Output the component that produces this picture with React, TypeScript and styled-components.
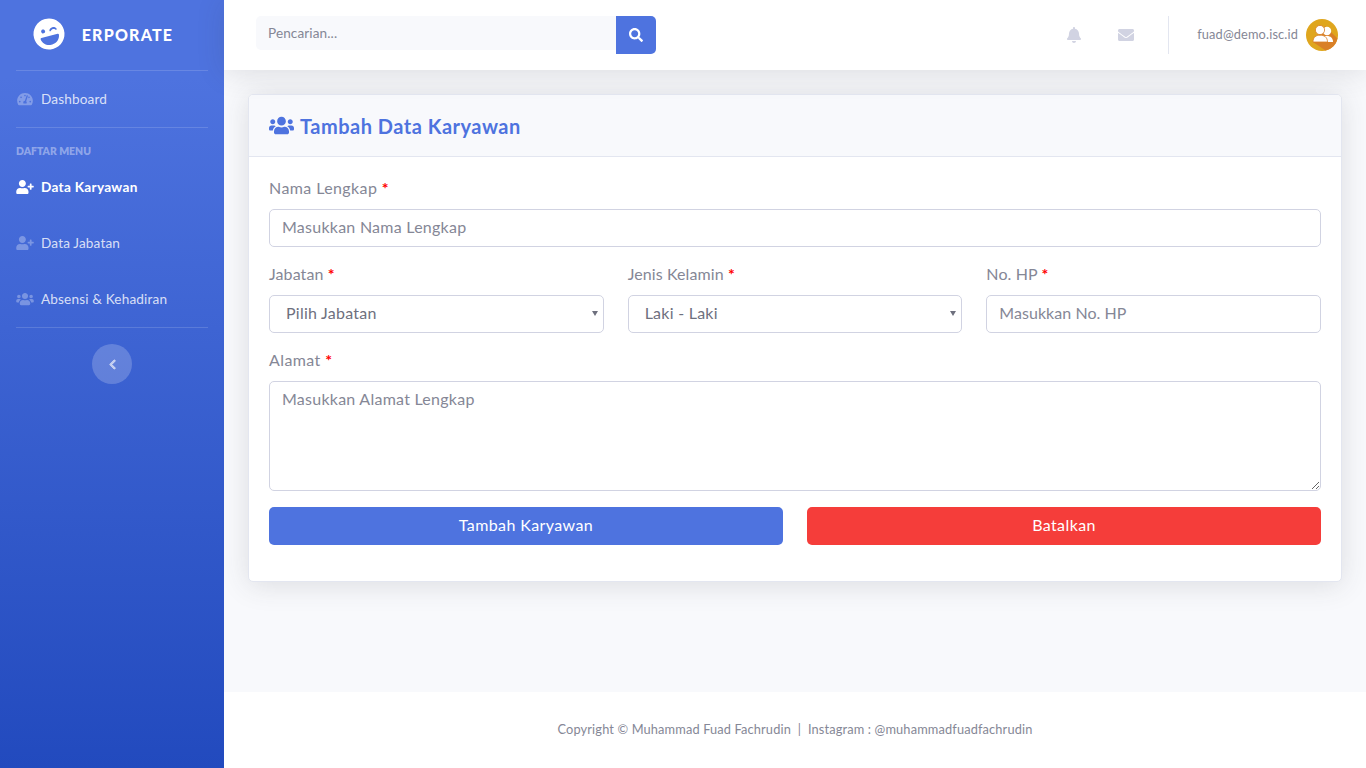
import React from 'react'
import styled, { createGlobalStyle } from 'styled-components'
import {
  FaBell,
  FaChevronLeft,
  FaEnvelope,
  FaLaughWink,
  FaSearch,
  FaTachometerAlt,
  FaUserPlus,
  FaUsers,
} from 'react-icons/fa'

const FONT = `"Lato", "Open Sans", "Liberation Sans", sans-serif`

const GlobalStyle = createGlobalStyle`
  * { box-sizing: border-box; }
  html, body { margin: 0; padding: 0; }
  body {
    font-family: ${FONT};
    font-size: 16px;
    color: #858796;
    background: #f8f9fc;
  }
`

const Wrapper = styled.div`
  display: flex;
  min-height: 768px;
`

const Sidebar = styled.aside`
  width: 224px;
  flex-shrink: 0;
  background-color: #4e73df;
  background-image: linear-gradient(180deg, #4e73df 10%, #224abe 100%);
  display: flex;
  flex-direction: column;
`

const Brand = styled.div`
  height: 70px;
  display: flex;
  align-items: center;
  justify-content: center;
  gap: 17px;
  color: #fff;
  padding: 0 18px 2px 0;
  svg {
    font-size: 32px;
    transform: rotate(-15deg);
  }
`

const BrandName = styled.span`
  font-size: 16px;
  font-weight: 900;
  letter-spacing: 1.2px;
`

const Divider = styled.hr`
  border: 0;
  border-top: 1px solid rgba(255, 255, 255, 0.15);
  margin: 0 16px;
`

const NavItem = styled.a<{ $active?: boolean }>`
  height: 56px;
  padding: 0 16px;
  display: flex;
  align-items: center;
  font-size: 13.6px;
  font-weight: ${(p) => (p.$active ? 700 : 400)};
  letter-spacing: ${(p) => (p.$active ? '0.3px' : '0.15px')};
  color: ${(p) => (p.$active ? '#fff' : 'rgba(255, 255, 255, 0.8)')};
  svg {
    width: 18px;
    font-size: 14px;
    margin-right: 7px;
    color: ${(p) => (p.$active ? '#fff' : 'rgba(255, 255, 255, 0.3)')};
  }
`

const SideHeading = styled.div`
  padding: 17px 16px 0;
  height: 31px;
  font-size: 10.4px;
  line-height: 13px;
  font-weight: 800;
  color: rgba(255, 255, 255, 0.4);
`

const ToggleRow = styled.div`
  display: flex;
  justify-content: center;
  padding-top: 16px;
`

const Toggle = styled.button`
  width: 40px;
  height: 40px;
  border: 0;
  padding: 0;
  border-radius: 50%;
  background: rgba(255, 255, 255, 0.2);
  color: rgba(255, 255, 255, 0.6);
  display: flex;
  align-items: center;
  justify-content: center;
  font-size: 11px;
  svg {
    stroke: currentColor;
    stroke-width: 36;
  }
`

const Main = styled.div`
  flex: 1;
  min-width: 0;
  display: flex;
  flex-direction: column;
`

const Topbar = styled.header`
  height: 70px;
  background: #fff;
  box-shadow: 0 2.4px 28px 0 rgba(58, 59, 69, 0.15);
  display: flex;
  align-items: center;
  justify-content: space-between;
  padding: 0 28px 0 32px;
  position: relative;
`

const SearchForm = styled.form`
  display: flex;
  align-items: flex-start;
  width: 400px;
  height: 38px;
`

const SearchInput = styled.input`
  flex: 1;
  min-width: 0;
  height: 34px;
  border: 0;
  outline: 0;
  padding: 0 12px;
  background: #f8f9fc;
  border-radius: 5px 0 0 5px;
  font-family: ${FONT};
  font-size: 13.6px;
  letter-spacing: 0.1px;
  color: #6e707e;
  &::placeholder {
    color: #858796;
    opacity: 1;
  }
`

const SearchButton = styled.button`
  width: 40px;
  height: 38px;
  border: 0;
  padding: 0;
  background: #4e73df;
  color: #fff;
  border-radius: 0 5px 5px 0;
  display: flex;
  align-items: center;
  justify-content: center;
  font-size: 14px;
`

const TopRight = styled.div`
  display: flex;
  align-items: center;
`

const TopIcon = styled.span`
  width: 52px;
  display: flex;
  justify-content: center;
  color: #d1d3e2;
  font-size: 16px;
`

const TopDivider = styled.div`
  width: 1px;
  height: 38px;
  background: #e3e6f0;
  margin: 0 28px 0 16px;
`

const UserEmail = styled.span`
  font-size: 12.8px;
  letter-spacing: 0.14px;
  color: #858796;
  margin-right: 8px;
  padding-bottom: 2px;
`

const Avatar = styled.svg`
  width: 32px;
  height: 32px;
  display: block;
`

const Content = styled.main`
  flex: 1;
  padding: 24px;
`

const Card = styled.section`
  background: #fff;
  border: 1px solid #e3e6f0;
  border-radius: 5px;
  box-shadow: 0 2.4px 28px 0 rgba(58, 59, 69, 0.15);
  overflow: hidden;
`

const CardHeader = styled.div`
  height: 62px;
  background: #f8f9fc;
  border-bottom: 1px solid #e3e6f0;
  padding: 0 20px;
  display: flex;
  align-items: center;
  gap: 6px;
  color: #4e73df;
  svg {
    font-size: 25px;
  }
`

const CardTitle = styled.h6`
  margin: 0;
  padding-top: 1px;
  font-size: 20px;
  font-weight: 700;
  letter-spacing: 0.5px;
  color: #4e73df;
`

const CardBody = styled.div`
  padding: 20px;
`

const Field = styled.div`
  margin-bottom: 16px;
`

const Label = styled.label<{ $tight?: boolean }>`
  display: block;
  height: 24px;
  line-height: 22px;
  margin-bottom: 8px;
  font-size: 16px;
  letter-spacing: ${(p) => (p.$tight ? '0.1px' : '0.4px')};
  color: #858796;
`

const Required = styled.span`
  color: #f00;
  font-weight: 700;
`

const controlStyle = `
  display: block;
  width: 100%;
  border: 1px solid #d1d3e2;
  border-radius: 5px;
  background: #fff;
  font-family: ${FONT};
  font-size: 16px;
  letter-spacing: 0.25px;
  color: #6e707e;
  outline: 0;
  &::placeholder {
    color: #858796;
    opacity: 1;
  }
`

const Input = styled.input<{ $tight?: boolean }>`
  ${controlStyle}
  height: 38px;
  padding: 4px 12px 8px;
  ${(p) => (p.$tight ? 'letter-spacing: 0.05px;' : '')}
`

const SelectWrap = styled.div`
  position: relative;
  &::after {
    content: '';
    position: absolute;
    right: 6px;
    top: 16px;
    border-left: 3px solid transparent;
    border-right: 3px solid transparent;
    border-top: 5px solid #6e707e;
    pointer-events: none;
  }
`

const Select = styled.select`
  ${controlStyle}
  appearance: none;
  height: 38px;
  padding: 4px 20px 8px 16px;
`

const TextArea = styled.textarea`
  ${controlStyle}
  height: 110px;
  padding: 7px 12px 5px;
`

const ThreeCols = styled.div`
  display: grid;
  grid-template-columns: repeat(3, 1fr);
  gap: 24px;
`

const TwoCols = styled.div`
  display: grid;
  grid-template-columns: repeat(2, 1fr);
  gap: 24px;
  margin-bottom: 16px;
`

const Button = styled.button<{ $color: string }>`
  height: 38px;
  border: 0;
  border-radius: 5px;
  padding: 0 0 3px;
  background: ${(p) => p.$color};
  color: #fff;
  font-family: ${FONT};
  font-size: 16px;
  letter-spacing: 0.4px;
`

const Footer = styled.footer`
  height: 76px;
  background: #fff;
  padding-bottom: 2px;
  display: flex;
  align-items: center;
  justify-content: center;
  font-size: 12.8px;
  letter-spacing: 0.14px;
  color: #858796;
  white-space: pre;
`

export default function App() {
  return (
    <>
      <GlobalStyle />
      <Wrapper>
        <Sidebar>
          <Brand>
            <FaLaughWink />
            <BrandName>ERPORATE</BrandName>
          </Brand>
          <Divider />
          <NavItem>
            <FaTachometerAlt />
            Dashboard
          </NavItem>
          <Divider />
          <SideHeading>DAFTAR MENU</SideHeading>
          <NavItem $active>
            <FaUserPlus />
            Data Karyawan
          </NavItem>
          <NavItem>
            <FaUserPlus />
            Data Jabatan
          </NavItem>
          <NavItem>
            <FaUsers />
            Absensi &amp; Kehadiran
          </NavItem>
          <Divider />
          <ToggleRow>
            <Toggle type="button">
              <FaChevronLeft />
            </Toggle>
          </ToggleRow>
        </Sidebar>
        <Main>
          <Topbar>
            <SearchForm>
              <SearchInput placeholder="Pencarian..." />
              <SearchButton type="button">
                <FaSearch />
              </SearchButton>
            </SearchForm>
            <TopRight>
              <TopIcon>
                <FaBell />
              </TopIcon>
              <TopIcon>
                <FaEnvelope />
              </TopIcon>
              <TopDivider />
              <UserEmail>fuad@demo.isc.id</UserEmail>
              <Avatar viewBox="0 0 32 32">
                <circle cx="16" cy="16" r="16" fill="#dfa61e" />
                {/* long shadow falling to the bottom right */}
                <path d="M19 7 L31.5 19.5 A16 16 0 0 1 19.5 31.6 L7 23 Z" fill="#d98027" />
                <circle cx="21" cy="12" r="4.2" fill="#fff" />
                <path d="M16 23 C16 18.5 18 17 21 17 C24.5 17 27 19 27 23 Z" fill="#fff" />
                <circle cx="14" cy="11" r="4.6" fill="#fff" stroke="#d98027" strokeWidth="0.8" />
                <path d="M7 23 C7 18 10 16.2 14 16.2 C18 16.2 21.5 18 21.5 23 Z" fill="#fff" stroke="#d98027" strokeWidth="0.8" />
              </Avatar>
            </TopRight>
          </Topbar>
          <Content>
            <Card>
              <CardHeader>
                <FaUsers />
                <CardTitle>Tambah Data Karyawan</CardTitle>
              </CardHeader>
              <CardBody>
                <Field>
                  <Label>
                    Nama Lengkap <Required>*</Required>
                  </Label>
                  <Input placeholder="Masukkan Nama Lengkap" />
                </Field>
                <ThreeCols>
                  <Field>
                    <Label $tight>
                      Jabatan <Required>*</Required>
                    </Label>
                    <SelectWrap>
                      <Select defaultValue="">
                        <option value="">Pilih Jabatan</option>
                      </Select>
                    </SelectWrap>
                  </Field>
                  <Field>
                    <Label $tight>
                      Jenis Kelamin <Required>*</Required>
                    </Label>
                    <SelectWrap>
                      <Select defaultValue="L">
                        <option value="L">Laki - Laki</option>
                        <option value="P">Perempuan</option>
                      </Select>
                    </SelectWrap>
                  </Field>
                  <Field>
                    <Label $tight>
                      No. HP <Required>*</Required>
                    </Label>
                    <Input $tight placeholder="Masukkan No. HP" />
                  </Field>
                </ThreeCols>
                <Field>
                  <Label>
                    Alamat <Required>*</Required>
                  </Label>
                  <TextArea placeholder="Masukkan Alamat Lengkap" />
                </Field>
                <TwoCols>
                  <Button type="button" $color="#4e73df">
                    Tambah Karyawan
                  </Button>
                  <Button type="button" $color="#f53d3a">
                    Batalkan
                  </Button>
                </TwoCols>
              </CardBody>
            </Card>
          </Content>
          <Footer>Copyright © Muhammad Fuad Fachrudin  |  Instagram : @muhammadfuadfachrudin</Footer>
        </Main>
      </Wrapper>
    </>
  )
}
